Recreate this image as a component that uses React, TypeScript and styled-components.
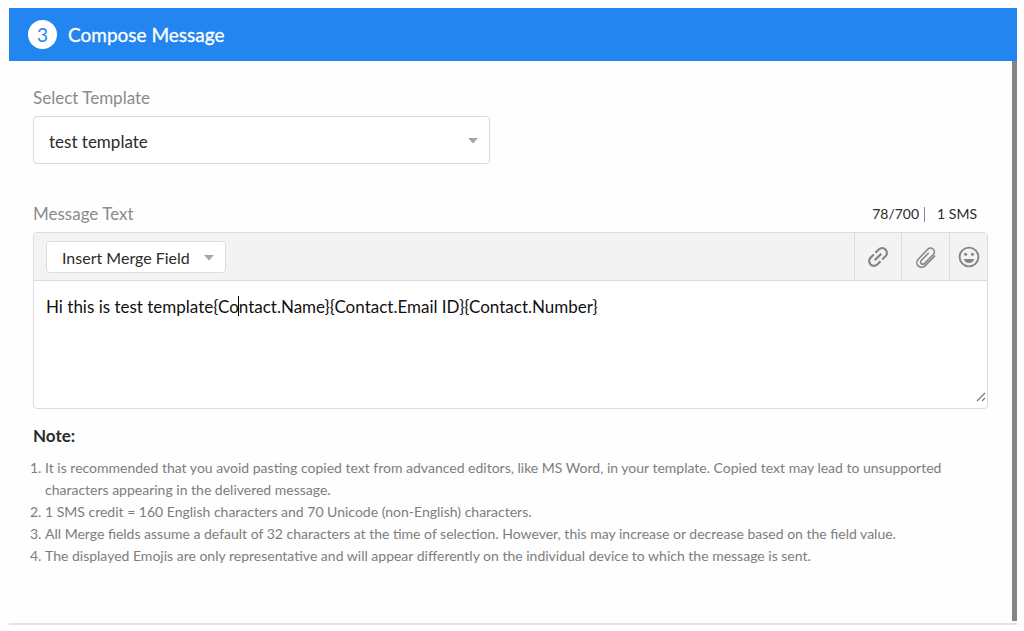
import React, { useState } from "react";
import styled, { createGlobalStyle } from "styled-components";

const GlobalStyle = createGlobalStyle`
  *, *::before, *::after { box-sizing: border-box; }
  body {
    margin: 0;
    background: #fefefe;
    color: #2b2b2b;
    font-family: Lato, "Liberation Sans", sans-serif;
    font-size: 17px;
  }
  button, select, textarea { font: inherit; color: inherit; }
`;

const Page = styled.main`
  padding: 8px 7px 6px 9px;
`;

const Panel = styled.section`
  border-bottom: 2px solid #e4e4e4;
`;

const Header = styled.header`
  display: flex;
  align-items: center;
  gap: 11px;
  height: 53px;
  padding: 0 19px;
  background: #2385f0;
  color: #fff;
`;

const Step = styled.span`
  display: grid;
  place-items: center;
  width: 29px;
  height: 29px;
  border-radius: 50%;
  background: #fff;
  color: #2385f0;
  font-size: 19px;
  line-height: 24px;
`;

const Title = styled.h1`
  margin: 0;
  font-size: 19px;
  line-height: 24px;
  font-weight: 400;
  -webkit-text-stroke: 0.3px currentColor;
`;

const Body = styled.div`
  display: flex;
  padding-bottom: 2px;
`;

const Scrollbar = styled.div`
  flex: none;
  width: 5px;
  background: #858787;
`;

const Form = styled.form`
  flex: 1;
  min-width: 0;
  padding: 25px 24px 54px;
`;

const Label = styled.label`
  display: block;
  color: #8b8b8b;
  line-height: 24px;
`;

const SelectBox = styled.div<{ $compact?: boolean }>`
  position: relative;
  width: ${(p) => (p.$compact ? "180px" : "457px")};
  max-width: 100%;
  height: ${(p) => (p.$compact ? "32px" : "48px")};
  margin: ${(p) => (p.$compact ? "0" : "6px 0 38px")};
  font-size: ${(p) => (p.$compact ? "16px" : "17px")};

  svg {
    position: absolute;
    top: 50%;
    right: 12px;
    margin-top: -2px;
    pointer-events: none;
  }
`;

const Select = styled.select`
  appearance: none;
  width: 100%;
  height: 100%;
  padding: 2px 30px 0 15px;
  border: 1px solid #dcdcdc;
  border-radius: 4px;
  background: #fff;
`;

const LabelRow = styled.div`
  display: flex;
  justify-content: space-between;
  margin-bottom: 6px;
`;

const Counter = styled.div`
  display: flex;
  align-items: center;
  padding-right: 11px;
  font-size: 14px;
  line-height: 24px;
`;

const Divider = styled.span`
  width: 1px;
  height: 15px;
  margin: 0 12px 0 5px;
  background: #8b8b8b;
`;

const Editor = styled.div`
  border: 1px solid #dcdcdc;
  border-radius: 4px;
  overflow: hidden;
  background: #fff;
`;

const Toolbar = styled.div`
  display: flex;
  align-items: center;
  height: 48px;
  padding-left: 12px;
  background: #f3f3f3;
  border-bottom: 1px solid #dcdcdc;
`;

const Tools = styled.div`
  display: flex;
  align-self: stretch;
  margin-left: auto;
`;

const ToolButton = styled.button<{ $width: number }>`
  display: grid;
  place-items: center;
  width: ${(p) => p.$width}px;
  padding: 0;
  border: 0;
  border-left: 1px solid #dcdcdc;
  background: transparent;
  color: #858585;
`;

const TextWrap = styled.div`
  position: relative;
`;

const TextArea = styled.textarea`
  display: block;
  width: 100%;
  height: 127px;
  padding: 14px 12px;
  border: 0;
  outline: 0;
  resize: none;
  background: transparent;
  color: #111;
  line-height: 24px;
`;

const Caret = styled.span`
  position: absolute;
  top: 15px;
  left: 204px;
  width: 1px;
  height: 20px;
  background: #000;
`;

const Grip = styled.svg`
  position: absolute;
  right: 1px;
  bottom: 6px;
`;

const NoteTitle = styled.h2`
  margin: 15px 0 9px;
  font-size: 17px;
  line-height: 24px;
  font-weight: 700;
`;

const Notes = styled.ol`
  margin: 0;
  padding-left: 12px;
  color: #7d7d7d;
  font-size: 14px;
  line-height: 22px;
`;

const Arrow = () => (
  <svg width="10" height="6" viewBox="0 0 10 6" aria-hidden="true">
    <path d="M0 0h10L5 5.4z" fill="#a6a6a6" />
  </svg>
);

const LinkIcon = () => (
  <svg width="28" height="28" viewBox="0 0 24 24" fill="currentColor" aria-hidden="true">
    <g transform="rotate(-45 12 12)">
      <path d="M3.9 12c0-1.71 1.39-3.1 3.1-3.1h4V7H7a5 5 0 0 0 0 10h4v-1.9H7c-1.71 0-3.1-1.39-3.1-3.1z" />
      <path d="M8 13h8v-2H8z" />
      <path d="M17 7h-4v1.9h4a3.1 3.1 0 0 1 0 6.2h-4V17h4a5 5 0 0 0 0-10z" />
    </g>
  </svg>
);

const ClipIcon = () => (
  <svg width="26" height="26" viewBox="0 0 24 24" fill="none" stroke="currentColor" strokeWidth="1.4" strokeLinecap="round" strokeLinejoin="round" aria-hidden="true">
    <path d="M20 11.2l-8.9 9a4.4 4.4 0 0 1-6.3 0 4.4 4.4 0 0 1 0-6.2l8.9-9.2a3.5 3.5 0 0 1 5 0 3.5 3.5 0 0 1 0 5l-8.2 8.3a2 2 0 0 1-2.9 0 2 2 0 0 1 0-2.9l6.5-6.7" />
  </svg>
);

const SmileIcon = () => (
  <svg width="24" height="24" viewBox="0 0 24 24" fill="none" aria-hidden="true">
    <circle cx="12" cy="12" r="9.4" stroke="currentColor" strokeWidth="1.9" />
    <circle cx="8.6" cy="9.3" r="1.5" fill="currentColor" />
    <circle cx="15.4" cy="9.3" r="1.5" fill="currentColor" />
    <path d="M6.8 14h10.4a5.4 5.4 0 0 1-10.4 0z" fill="currentColor" />
  </svg>
);

export default function App() {
  const [text, setText] = useState(
    "Hi this is test template{Contact.Name}{Contact.Email ID}{Contact.Number}"
  );

  return (
    <>
      <GlobalStyle />
      <Page>
        <Panel>
          <Header>
            <Step>3</Step>
            <Title>Compose Message</Title>
          </Header>
          <Body>
            <Form>
              <Label htmlFor="template">Select Template</Label>
              <SelectBox>
                <Select id="template">
                  <option>test template</option>
                </Select>
                <Arrow />
              </SelectBox>
              <LabelRow>
                <Label htmlFor="message">Message Text</Label>
                <Counter>
                  <span>78/700</span>
                  <Divider />
                  <span>1 SMS</span>
                </Counter>
              </LabelRow>
              <Editor>
                <Toolbar>
                  <SelectBox $compact>
                    <Select aria-label="Insert Merge Field">
                      <option>Insert Merge Field</option>
                    </Select>
                    <Arrow />
                  </SelectBox>
                  <Tools>
                    <ToolButton type="button" $width={47} aria-label="Insert link">
                      <LinkIcon />
                    </ToolButton>
                    <ToolButton type="button" $width={48} aria-label="Attach file">
                      <ClipIcon />
                    </ToolButton>
                    <ToolButton type="button" $width={38} aria-label="Insert emoji">
                      <SmileIcon />
                    </ToolButton>
                  </Tools>
                </Toolbar>
                <TextWrap>
                  <TextArea
                    id="message"
                    spellCheck={false}
                    value={text}
                    onChange={(e) => setText(e.target.value)}
                  />
                  <Caret />
                  <Grip width="10" height="10" viewBox="0 0 10 10" stroke="#777" strokeWidth="1.2" aria-hidden="true">
                    <path d="M1 9L9 1M6 9l3-3" />
                  </Grip>
                </TextWrap>
              </Editor>
              <NoteTitle>Note:</NoteTitle>
              <Notes>
                <li>
                  It is recommended that you avoid pasting copied text from advanced editors, like MS
                  Word, in your template. Copied text may lead to unsupported characters appearing in
                  the delivered message.
                </li>
                <li>1 SMS credit = 160 English characters and 70 Unicode (non-English) characters.</li>
                <li>
                  All Merge fields assume a default of 32 characters at the time of selection. However,
                  this may increase or decrease based on the field value.
                </li>
                <li>
                  The displayed Emojis are only representative and will appear differently on the
                  individual device to which the message is sent.
                </li>
              </Notes>
            </Form>
            <Scrollbar />
          </Body>
        </Panel>
      </Page>
    </>
  );
}
